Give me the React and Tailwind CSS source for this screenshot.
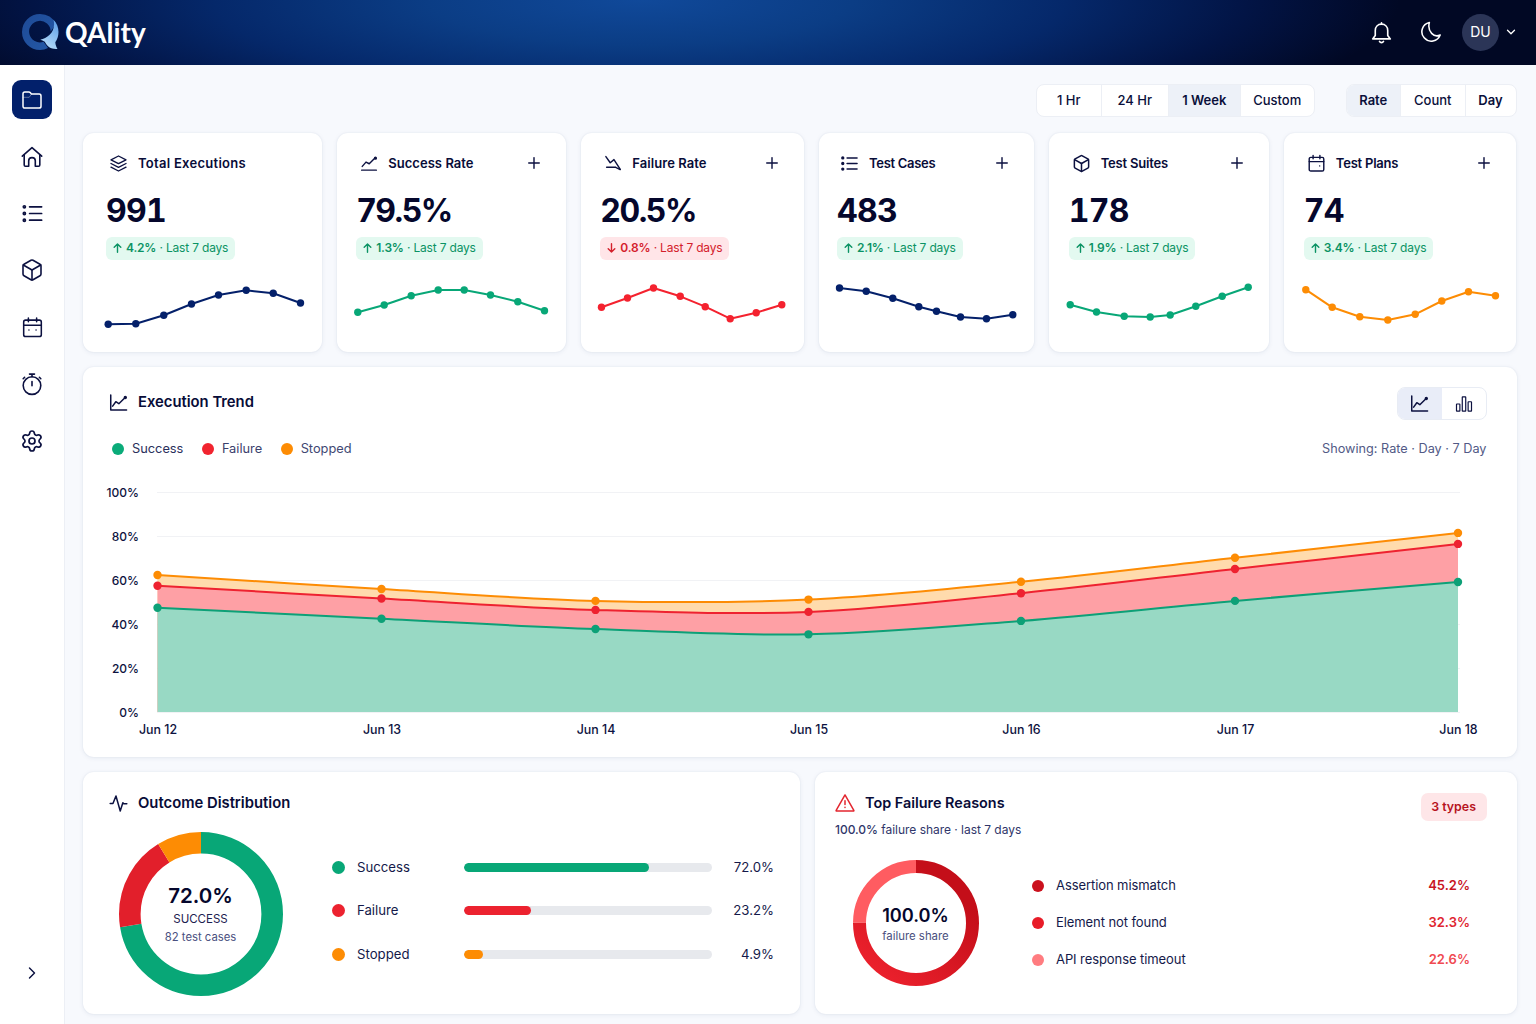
import { useState } from 'react';
import clsx from 'clsx';
import { Box, ChevronDown, ChevronRight, Plus, Settings } from 'lucide-react';

/* ---------- Icons ---------- */

function Icon({ size = 24, stroke = 1.6, className, children }) {
  return (
    <svg
      width={size}
      height={size}
      viewBox="0 0 24 24"
      fill="none"
      stroke="currentColor"
      strokeWidth={stroke}
      strokeLinecap="round"
      strokeLinejoin="round"
      className={clsx('shrink-0', className)}
    >
      {children}
    </svg>
  );
}

const FolderIcon = (props) => (
  <Icon {...props}>
    <path d="M3 18.2V5.8C3 4.6 3.7 3.900 4.800 3.900h4c.7 0 1.200.3 1.600.8l1.100 1.400h7.600c1.200 0 1.900.7 1.900 1.900v10.200c0 1.200-.7 1.900-1.900 1.900H4.900C3.700 20.100 3 19.400 3 18.200z" />
    <path d="M3 9.300h6.200l2.300-3.200" strokeWidth="0.600" opacity="0.600" />
  </Icon>
);

const HomeIcon = (props) => (
  <Icon {...props}>
    <path d="M2.300 11.200 12 2.600l9.700 8.600" />
    <path d="M4.200 9.700v10.200c0 .8.5 1.300 1.300 1.300h3.200v-5.400c0-1.900 1.300-3.200 3.300-3.200s3.300 1.300 3.300 3.200v5.400h3.200c.8 0 1.300-.5 1.300-1.300V9.700" />
  </Icon>
);

const ListIcon = (props) => (
  <Icon {...props}>
    <path d="M9 5h12.500M9 12h12.500M9 19h12.500" />
    <circle cx="3.500" cy="5" r="1.100" />
    <circle cx="3.500" cy="12" r="1.100" />
    <circle cx="3.500" cy="19" r="1.100" />
  </Icon>
);

const CalendarIcon = ({ dots = true, ...props }) => (
  <Icon {...props}>
    <rect x="2.800" y="4.300" width="18.400" height="17.200" rx="2" />
    <path d="M2.800 9.600h18.400M7.700 2v4M16.300 2v4" />
    {dots ? <path d="M8.300 14.500h.01M15.700 14.500h.01" /> : <path d="M16 15h.01" />}
  </Icon>
);

const StopwatchIcon = (props) => (
  <Icon {...props}>
    <circle cx="12" cy="13.600" r="8.800" />
    <path d="M9.500 2.100h5M12 2.100v2.700M12 9.500v4.300M4.600 5.300 3.200 6.700M19.400 5.300l1.400 1.400" />
  </Icon>
);

const LayersIcon = (props) => (
  <Icon {...props}>
    <path d="m12 2.500 9.500 4.800-9.500 4.800-9.500-4.800z" />
    <path d="m2.500 12 9.500 4.800 9.500-4.800" />
    <path d="m2.500 16.700 9.500 4.800 9.500-4.800" />
  </Icon>
);

const TrendIcon = ({ axis = true, ...props }) => (
  <Icon {...props}>
    <path d={axis ? 'M2.200 2.500v19h20' : 'M2.200 21.500h19.600'} />
    <path d={axis ? 'm4.600 16.600 4-5.600 3.800 2.500 7.400-7.200' : 'm3 16.500 5-5.700 4.300 2.200L20 5.300'} />
    <circle cx="20.600" cy="5.600" r="1.200" fill="currentColor" />
  </Icon>
);

const DeclineIcon = (props) => (
  <Icon {...props}>
    <path d="m2.500 3.500 5.800 8.200 5-4.200 8.400 13" />
    <path d="M3.500 17.600h11.200M15 17.600l6.500 3.100" />
  </Icon>
);

const PulseIcon = (props) => (
  <Icon {...props}>
    <path d="M1.500 12h3.500L8.800 2.500l5.400 19L17.500 11l1.200 1.300H22.500" />
  </Icon>
);

const BarsIcon = (props) => (
  <Icon {...props}>
    <rect x="2" y="12" width="4.500" height="9.500" rx="0.500" />
    <rect x="9.700" y="2.500" width="4.600" height="19" rx="0.500" />
    <rect x="17.500" y="9" width="4.500" height="12.500" rx="0.500" />
  </Icon>
);

const WarningIcon = (props) => (
  <Icon {...props}>
    <path d="M12 2.300 22.600 20.800c.2.400 0 .8-.5.800H1.900c-.5 0-.7-.4-.5-.8z" />
    <path d="M12 9.300v4.500M12 17.200v.1" />
  </Icon>
);

const BellIcon = (props) => (
  <Icon {...props}>
    <path d="M12 3.300c-4 0-6.500 2.800-6.500 6.600v5.200L2.800 18.700h18.400l-2.700-3.600V9.900c0-3.800-2.500-6.600-6.500-6.600z" />
    <path d="M12 1.900v1.200M9.900 21.300c.4.700 1.200 1.200 2.100 1.200s1.700-.5 2.100-1.200" />
  </Icon>
);

const MoonIcon = (props) => (
  <Icon {...props}>
    <path d="M10.200 1.600A10.300 10.300 0 1 0 22 15.300C15.500 18.600 7.600 11.800 10.200 1.600z" />
  </Icon>
);

function Logo() {
  return (
    <svg width="38" height="38" viewBox="0 0 38 38">
      <defs>
        <linearGradient id="ring" x1="0" y1="0" x2="1" y2="1">
          <stop offset="0" stopColor="#1e4a96" />
          <stop offset="1" stopColor="#2459a8" />
        </linearGradient>
        <linearGradient id="tail" x1="0.700" y1="0" x2="0.300" y2="1">
          <stop offset="0" stopColor="#5f9fe6" />
          <stop offset="1" stopColor="#b9defb" />
        </linearGradient>
      </defs>
      <path
        fill="url(#ring)"
        fillRule="evenodd"
        d="M19 1a18 18 0 1 0 0 36c3 0 5.500-.6 8-1.900l-4.500-6.300A10.800 10.800 0 1 1 29.700 18.500L35 11A18 18 0 0 0 19 1z"
      />
      <path
        fill="url(#tail)"
        d="M32.500 6.800C39 13.500 38.700 23 34.300 29.300c.2 2.700 1 4.700 2.200 6.600-6 .6-9.800-1.700-12.700-7.100-1.600-1-3-1.700-4.500-2 7.500-1.600 16.200-8.600 13.200-20z"
      />
    </svg>
  );
}

/* ---------- Header ---------- */

function Header() {
  return (
    <header className="h-[65px] shrink-0 flex items-center justify-between pl-[21px] pr-[18px] pb-px text-white bg-[#010824] bg-[radial-gradient(ellipse_760px_160px_at_640px_0px,#10499a_0%,#0b3d85_28%,#05286a_56%,#021445_80%,#010824_100%)]">
      <div className="flex items-center gap-[6px] -mt-px">
        <Logo />
        <span className="font-[Lato,sans-serif] text-[28px] leading-8 font-bold">QAlity</span>
      </div>
      <div className="flex items-center">
        <button className="mr-[27px]">
          <BellIcon size={23} stroke={1.700} />
        </button>
        <button className="mr-5">
          <MoonIcon size={22} stroke={1.700} />
        </button>
        <button className="flex items-center gap-[5px]">
          <span className="w-[37px] h-[37px] rounded-full bg-[#2b3557] flex items-center justify-center text-sm">
            DU
          </span>
          <ChevronDown size={14} strokeWidth={2.200} />
        </button>
      </div>
    </header>
  );
}

/* ---------- Sidebar ---------- */

const navItems = [
  { id: 'projects', icon: <FolderIcon size={24} stroke={1.500} /> },
  { id: 'home', icon: <HomeIcon size={24} stroke={1.600} /> },
  { id: 'cases', icon: <ListIcon size={23} stroke={1.800} /> },
  { id: 'suites', icon: <Box size={24} strokeWidth={1.600} /> },
  { id: 'plans', icon: <CalendarIcon size={23} stroke={1.600} /> },
  { id: 'timers', icon: <StopwatchIcon size={24} stroke={1.600} /> },
  { id: 'settings', icon: <Settings size={24} strokeWidth={1.700} /> },
];

function Sidebar() {
  const [active, setActive] = useState('projects');

  return (
    <aside className="w-[65px] shrink-0 flex flex-col items-center justify-between bg-white border-r border-[#eceff5] pt-[15px] pb-[41px]">
      <nav className="flex flex-col gap-[17.500px]">
        {navItems.map((item) => (
          <button
            key={item.id}
            onClick={() => setActive(item.id)}
            className={clsx(
              'w-10 h-[39.400px] rounded-[9px] flex items-center justify-center',
              active === item.id ? 'bg-[#02206b] text-white' : 'text-[#0c1140]'
            )}
          >
            {item.icon}
          </button>
        ))}
      </nav>
      <button className="text-[#0c1140]">
        <ChevronRight size={20} strokeWidth={1.700} />
      </button>
    </aside>
  );
}

/* ---------- Filters ---------- */

const ranges = [
  { label: '1 Hr', width: 'w-[64.500px]' },
  { label: '24 Hr', width: 'w-[67.500px]' },
  { label: '1 Week', width: 'w-[71.500px]', active: true },
  { label: 'Custom', width: 'w-[73.500px]' },
];

const modes = [
  { label: 'Rate', width: 'w-[54.500px]', active: true },
  { label: 'Count', width: 'w-[64.500px]' },
  { label: 'Day', width: 'w-[50px]', bold: true },
];

function Segmented({ items }) {
  return (
    <div className="flex h-[33px] rounded-lg border border-[#eceff5] bg-white overflow-hidden divide-x divide-[#eceff5]">
      {items.map((item) => (
        <button
          key={item.label}
          className={clsx(
            'text-[13px] text-[#0a0f3a]',
            item.width,
            item.active && 'bg-[#edf1f8]',
            item.active || item.bold ? 'font-semibold' : 'font-[450]'
          )}
        >
          {item.label}
        </button>
      ))}
    </div>
  );
}

/* ---------- Stat cards ---------- */

const NAVY = '#04206a';
const GREEN = '#08a777';
const RED = '#f4222f';
const ORANGE = '#fd8c04';

const stats = [
  {
    title: 'Total Executions',
    tracking: 'tracking-[0.280px]',
    value: '991',
    delta: '4.2%',
    up: true,
    color: NAVY,
    pad: 'pl-[23.500px]',
    icon: <LayersIcon size={19} stroke={1.700} />,
    points: [[25.2, 52.3], [52.8, 51.7], [80.8, 43.3], [108.5, 32], [135.5, 23], [163.2, 18.3], [190.2, 21.3], [217.5, 31]],
  },
  {
    title: 'Success Rate',
    tracking: 'tracking-[0.050px]',
    value: '79.5%',
    delta: '1.3%',
    up: true,
    add: true,
    color: GREEN,
    pad: 'pl-[19px]',
    icon: <TrendIcon size={18} stroke={1.900} axis={false} />,
    points: [[20.8, 40.3], [47.2, 33], [74.2, 23.7], [101.2, 18], [127.2, 18], [153.5, 23], [180.8, 29.7], [207.5, 38.7]],
  },
  {
    title: 'Failure Rate',
    tracking: 'tracking-[0.050px]',
    value: '20.5%',
    delta: '0.8%',
    add: true,
    color: RED,
    pad: 'pl-[19px]',
    icon: <DeclineIcon size={18} stroke={1.900} />,
    points: [[20.5, 35.3], [46.5, 26], [72.5, 16], [99.2, 24.3], [124.2, 34.7], [149.2, 46.7], [175.2, 40.7], [200.8, 32.7]],
  },
  {
    title: 'Test Cases',
    tracking: 'tracking-[-0.300px]',
    value: '483',
    delta: '2.1%',
    up: true,
    add: true,
    color: NAVY,
    pad: 'pl-[18px]',
    icon: <ListIcon size={19} stroke={2} />,
    points: [[20.5, 16], [47.2, 19.3], [73.8, 26.3], [99.8, 34.7], [117.5, 39.3], [141.5, 45], [167.5, 46.7], [193.8, 42.7]],
  },
  {
    title: 'Test Suites',
    tracking: 'tracking-[-0.180px]',
    value: '178',
    delta: '1.9%',
    up: true,
    add: true,
    color: GREEN,
    pad: 'pl-[19.500px]',
    icon: <Box size={19} strokeWidth={1.900} />,
    points: [[21.2, 32.7], [47.5, 40], [75.2, 44.3], [101.2, 45], [121.2, 43], [146.8, 34.3], [173.2, 24.3], [199.2, 15.3]],
  },
  {
    title: 'Test Plans',
    tracking: 'tracking-[-0.220px]',
    value: '74',
    delta: '3.4%',
    up: true,
    add: true,
    color: ORANGE,
    pad: 'pl-[19.500px]',
    icon: <CalendarIcon size={19} stroke={1.800} dots={false} />,
    points: [[21.8, 17.7], [48.2, 35.3], [75.8, 44.7], [103.8, 48], [131.2, 42.3], [157.8, 29], [184.5, 19.7], [211.5, 23.7]],
  },
];

function Card({ className, children }) {
  return (
    <section
      className={clsx(
        'bg-white rounded-[11px] shadow-[0_0_2px_rgba(30,50,100,0.070),0_1px_5px_rgba(30,50,100,0.080)]',
        className
      )}
    >
      {children}
    </section>
  );
}

function Sparkline({ points, color }) {
  return (
    <svg className="block w-full h-[60px]">
      <polyline
        points={points.map((p) => p.join(',')).join(' ')}
        fill="none"
        stroke={color}
        strokeWidth="2"
        strokeLinejoin="round"
      />
      {points.map(([x, y]) => (
        <circle key={x} cx={x} cy={y} r="3.700" fill={color} />
      ))}
    </svg>
  );
}

function Arrow({ up }) {
  return (
    <svg width="9" height="10" viewBox="0 0 9 10" fill="none" stroke="currentColor" strokeWidth="1.400" strokeLinecap="round" strokeLinejoin="round">
      <path d={up ? 'M4.500 9.200V1M1.200 4.200 4.500.9l3.300 3.300' : 'M4.500.8V9M1.200 5.800l3.300 3.300 3.300-3.300'} />
    </svg>
  );
}

function StatCard({ stat }) {
  return (
    <Card className="h-[219px] pt-5">
      <div className={clsx('flex items-center h-5 pr-[23px]', stat.pad)}>
        <span className="ml-[2.500px] w-5 flex justify-center text-[#0c1140]">{stat.icon}</span>
        <h3
          className={clsx(
            'ml-[9.500px] pt-px flex-1 text-[13px] font-semibold text-[#080c38] whitespace-nowrap',
            stat.tracking
          )}
        >
          {stat.title}
        </h3>
        {stat.add && (
          <button className="text-[#0c1140]">
            <Plus size={18} strokeWidth={1.900} />
          </button>
        )}
      </div>
      <div className={stat.pad}>
        <p
          className={clsx(
            'mt-[18px] h-10 leading-10 text-[32px] font-[650] tabular-nums text-[#05072c]',
            stat.value.endsWith('%') ? 'tracking-[-1.500px]' : 'tracking-[-0.700px]'
          )}
        >
          {stat.value}
        </p>
        <span
          className={clsx(
            'mt-[5.500px] inline-flex items-center h-[23px] px-[7px] rounded-md text-[12px] tracking-[-0.180px] whitespace-pre align-top',
            stat.up ? 'bg-[#e3f9f0] text-[#0b9364]' : 'bg-[#ffe5e8] text-[#d4202c]'
          )}
        >
          <Arrow up={stat.up} />
          <b className="ml-1 font-semibold">{stat.delta}</b> · Last 7 days
        </span>
      </div>
      <div className="mt-[12.500px]">
        <Sparkline points={stat.points} color={stat.color} />
      </div>
    </Card>
  );
}

/* ---------- Execution trend ---------- */

const days = [
  { label: 'Jun 12', x: 74.5, success: 47.4, failure: 57.4, stopped: 62.3 },
  { label: 'Jun 13', x: 298.5, success: 42.4, failure: 51.6, stopped: 55.9 },
  { label: 'Jun 14', x: 512.5, success: 37.7, failure: 46.4, stopped: 50.5 },
  { label: 'Jun 15', x: 725.5, success: 35.3, failure: 45.5, stopped: 51.1 },
  { label: 'Jun 16', x: 938, success: 41.4, failure: 54, stopped: 59.2 },
  { label: 'Jun 17', x: 1152, success: 50.5, failure: 65, stopped: 70.1 },
  { label: 'Jun 18', x: 1375, success: 59.1, failure: 76.4, stopped: 81.4 },
];

const series = [
  { key: 'stopped', color: ORANGE, fill: '#ffdbad' },
  { key: 'failure', color: '#ee2230', fill: '#fea0a5' },
  { key: 'success', color: '#0da077', fill: '#98d9c4' },
];

const BASE = 235;
const yOf = (pct) => BASE - pct * 2.2;

function smoothPath(pts) {
  let d = `M${pts[0][0]} ${pts[0][1]}`;
  for (let i = 0; i < pts.length - 1; i++) {
    const p0 = pts[i - 1] || pts[i];
    const p1 = pts[i];
    const p2 = pts[i + 1];
    const p3 = pts[i + 2] || p2;
    const c1 = [p1[0] + (p2[0] - p0[0]) / 6, p1[1] + (p2[1] - p0[1]) / 6];
    const c2 = [p2[0] - (p3[0] - p1[0]) / 6, p2[1] - (p3[1] - p1[1]) / 6];
    d += ` C${c1.join(' ')} ${c2.join(' ')} ${p2.join(' ')}`;
  }
  return d;
}

function TrendChart() {
  const lines = series.map((s) => {
    const pts = days.map((day) => [day.x, yOf(day[s.key])]);
    return { ...s, pts, d: smoothPath(pts) };
  });

  return (
    <svg className="block w-full h-[270px]" fontSize="12" fontWeight="450" fill="#0d1240">
      {[0, 20, 40, 60, 80, 100].map((tick) => (
        <g key={tick}>
          <line x1="74" x2="1377" y1={yOf(tick) + 0.5} y2={yOf(tick) + 0.5} stroke="#f1f2f5" />
          <text x="56" y={yOf(tick) + 4.5} textAnchor="end">
            {tick}%
          </text>
        </g>
      ))}
      {lines.map((line) => (
        <path key={line.key} d={`${line.d} V${BASE} H74.5 Z`} fill={line.fill} />
      ))}
      {lines.map((line) => (
        <g key={line.key}>
          <path d={line.d} fill="none" stroke={line.color} strokeWidth="2" />
          {line.pts.map(([x, y]) => (
            <circle key={x} cx={x} cy={y} r="4.200" fill={line.color} />
          ))}
        </g>
      ))}
      {days.map((day) => (
        <text key={day.label} x={day.x + 0.5} y="256.500" textAnchor="middle" fontSize="12.400">
          {day.label}
        </text>
      ))}
    </svg>
  );
}

const legend = [
  { label: 'Success', dot: 'bg-[#0aab79]', text: 'text-[#2a2f5c]' },
  { label: 'Failure', dot: 'bg-[#f1242f]', text: 'text-[#3b416d]' },
  { label: 'Stopped', dot: 'bg-[#fd8c04]', text: 'text-[#414873]' },
];

function ExecutionTrend() {
  return (
    <Card className="h-[390px] pt-5">
      <div className="flex items-center justify-between h-[33px] pl-[26px] pr-[30px]">
        <div className="flex items-center gap-[10.500px] -mt-[2px]">
          <TrendIcon size={19} stroke={1.900} className="text-[#0c1140]" />
          <h2 className="text-[14.800px] font-semibold text-[#080c38]">Execution Trend</h2>
        </div>
        <div className="flex h-[33px] rounded-lg border border-[#e8ecf4] overflow-hidden text-[#0c1140]">
          <button className="w-[44px] bg-[#e9edf8] flex items-center justify-center">
            <TrendIcon size={19} stroke={1.900} />
          </button>
          <button className="w-[44px] flex items-center justify-center">
            <BarsIcon size={18} stroke={1.600} />
          </button>
        </div>
      </div>
      <div className="flex items-center justify-between mt-[18.500px] h-5 pl-[29.500px] pr-[30px] text-[12.800px]">
        <ul className="flex gap-[18.500px]">
          {legend.map((item) => (
            <li key={item.label} className="flex items-center gap-2">
              <span className={clsx('w-3 h-3 rounded-full', item.dot)} />
              <span className={item.text}>{item.label}</span>
            </li>
          ))}
        </ul>
        <p className="text-[12.700px] text-[#525a86]">Showing: Rate · Day · 7 Day</p>
      </div>
      <div className="mt-[18.500px]">
        <TrendChart />
      </div>
    </Card>
  );
}

/* ---------- Donuts ---------- */

function Donut({ size, radius, width, segments, children }) {
  const c = 2 * Math.PI * radius;
  let start = 0;

  return (
    <div className="grid place-items-center shrink-0">
      <svg width={size} height={size} className="[grid-area:1/1] -rotate-90">
        {segments.map((seg) => {
          const offset = start;
          start += seg.share;
          return (
            <circle
              key={seg.color}
              cx={size / 2}
              cy={size / 2}
              r={radius}
              fill="none"
              stroke={seg.color}
              strokeWidth={width}
              strokeDasharray={`${seg.share * c} ${c}`}
              strokeDashoffset={-offset * c}
            />
          );
        })}
      </svg>
      <div className="[grid-area:1/1] pt-[1.500px] text-center">{children}</div>
    </div>
  );
}

const outcomes = [
  { label: 'Success', value: '72.0%', fill: 74.8, bg: 'bg-[#08a777]' },
  { label: 'Failure', value: '23.2%', fill: 27.2, bg: 'bg-[#ec222f]' },
  { label: 'Stopped', value: '4.9%', fill: 8, bg: 'bg-[#fd8c04]' },
];

const outcomeSegments = [
  { color: '#08a777', share: 0.723 },
  { color: '#e21f2b', share: 0.188 },
  { color: '#fd8c04', share: 0.089 },
];

function OutcomeDistribution() {
  return (
    <Card className="w-[717.500px] h-[242px] pt-[20px]">
      <div className="flex items-center gap-[10.500px] h-[22px] pl-[26px]">
        <PulseIcon size={19} stroke={1.900} className="text-[#0c1140] -mt-0.500" />
        <h2 className="text-[14.800px] font-semibold text-[#080c38]">Outcome Distribution</h2>
      </div>
      <div className="flex items-center mt-[17.500px] pl-[36px] pr-[26px]">
        <Donut size={164} radius={71.2} width={21.6} segments={outcomeSegments}>
          <p className="text-[20.500px] leading-7 font-semibold text-[#05072c]">72.0%</p>
          <p className="text-[11.500px] leading-[18px] text-[#1c2150]">SUCCESS</p>
          <p className="text-[11.300px] leading-[18px] text-[#4a5080]">82 test cases</p>
        </Donut>
        <ul className="ml-[49.500px] -mt-[6px] flex-1">
          {outcomes.map((row) => (
            <li key={row.label} className="flex items-center h-[43.500px] text-[13.200px] text-[#14194a]">
              <span className={clsx('w-[13px] h-[13px] rounded-full', row.bg)} />
              <span className="ml-3 pt-px w-[106.500px]">{row.label}</span>
              <div className="w-[248px] h-[9px] rounded-full bg-[#e7e9ed] overflow-hidden">
                <div className={clsx('h-full rounded-full', row.bg)} style={{ width: `${row.fill}%` }} />
              </div>
              <span className="flex-1 pt-px text-right">{row.value}</span>
            </li>
          ))}
        </ul>
      </div>
    </Card>
  );
}

const reasons = [
  { label: 'Assertion mismatch', value: '45.2%', dot: 'bg-[#cb111d]', text: 'text-[#c8151f]' },
  { label: 'Element not found', value: '32.3%', dot: 'bg-[#e81c28]', text: 'text-[#df2530]' },
  { label: 'API response timeout', value: '22.6%', dot: 'bg-[#ff7c80]', text: 'text-[#f04a52]' },
];

const reasonSegments = [
  { color: 'url(#reds)', share: 0.75 },
  { color: '#ff5c61', share: 0.25 },
];

function TopFailureReasons() {
  return (
    <Card className="flex-1 h-[242px] pt-5">
      <svg width="0" height="0" className="absolute">
        <defs>
          <linearGradient id="reds" x1="0.800" y1="0.800" x2="0" y2="0.100">
            <stop offset="0" stopColor="#c40e19" />
            <stop offset="1" stopColor="#ee222e" />
          </linearGradient>
        </defs>
      </svg>
      <div className="flex justify-between h-[52px] pl-5 pr-[30px]">
        <div>
          <div className="flex items-center gap-[10px] h-[22px]">
            <WarningIcon size={20} stroke={1.800} className="text-[#e3262f]" />
            <h2 className="text-[14.400px] font-semibold text-[#080c38]">Top Failure Reasons</h2>
          </div>
          <p className="mt-[7px] leading-[18px] text-[12px] tracking-[-0.030px] text-[#30366a]">
            <span className="font-medium">100.0%</span> failure share · last 7 days
          </p>
        </div>
        <span className="mt-[1px] h-7 px-[10.500px] flex items-center rounded-[7px] bg-[#fee6e8] text-[12.400px] font-semibold text-[#b7131e]">
          3 types
        </span>
      </div>
      <div className="flex items-center mt-[16px] pl-[37.500px] pr-[46.500px]">
        <Donut size={126} radius={56.5} width={13} segments={reasonSegments}>
          <p className="text-[18.200px] leading-6 font-semibold text-[#05072c]">100.0%</p>
          <p className="text-[11.400px] leading-[18px] text-[#4a5080]">failure share</p>
        </Donut>
        <ul className="ml-[53.500px] flex-1">
          {reasons.map((row) => (
            <li key={row.label} className="flex items-center h-[37px] text-[13px] text-[#14194a]">
              <span className={clsx('w-3 h-3 rounded-full', row.dot)} />
              <span className="ml-3 flex-1 tracking-[-0.080px]">{row.label}</span>
              <span className={clsx('font-semibold', row.text)}>{row.value}</span>
            </li>
          ))}
        </ul>
      </div>
    </Card>
  );
}

export default function App() {
  return (
    <div className="h-screen flex flex-col overflow-hidden font-[Inter,sans-serif] bg-[#f7f9fd]">
      <Header />
      <div className="flex flex-1 min-h-0">
        <Sidebar />
        <main className="flex-1 pl-[17.500px] pr-[19.500px]">
          <div className="flex justify-end gap-[30.500px] pt-[19px]">
            <Segmented items={ranges} />
            <Segmented items={modes} />
          </div>

          <div className="mt-4 grid grid-cols-[239.500fr_229fr_222.500fr_215fr_220fr_232fr] gap-[15px]">
            {stats.map((stat) => (
              <StatCard key={stat.title} stat={stat} />
            ))}
          </div>

          <div className="mt-[15px]">
            <ExecutionTrend />
          </div>

          <div className="mt-[15px] flex gap-[15px]">
            <OutcomeDistribution />
            <TopFailureReasons />
          </div>
        </main>
      </div>
    </div>
  );
}
